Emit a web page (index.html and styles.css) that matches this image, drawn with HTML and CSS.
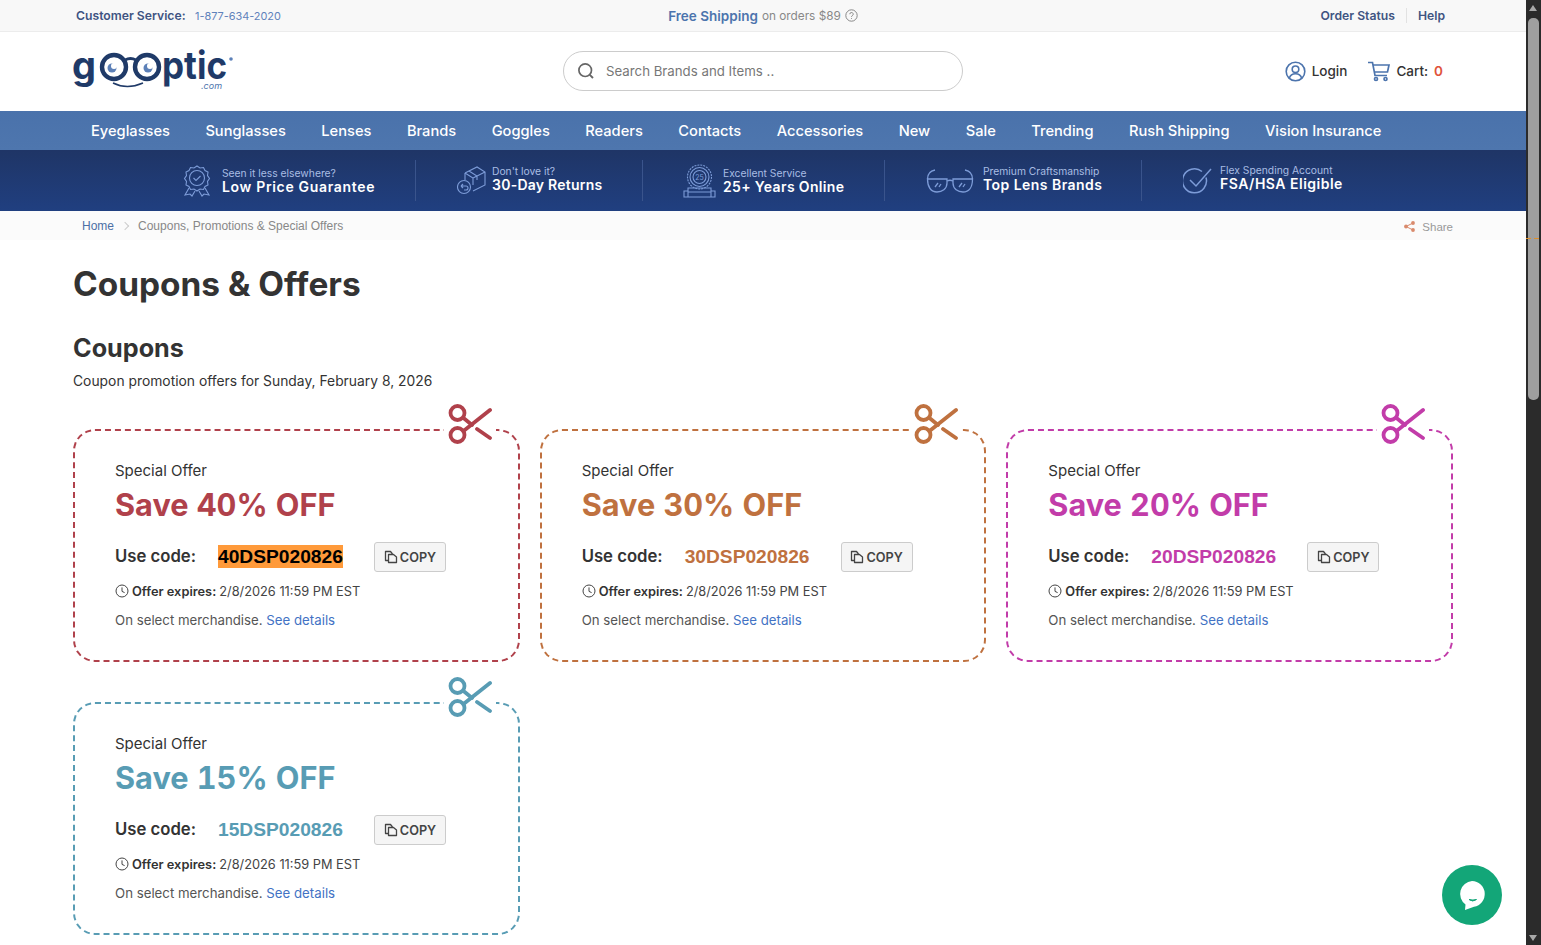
FILE: index.html
```html
<!DOCTYPE html>
<html lang="en">
<head>
    <meta charset="UTF-8">
    <meta name="viewport" content="width=device-width, initial-scale=1.0">
    <title>Coupons &amp; Offers</title>
    <link rel="stylesheet" href="styles.css">
</head>
<body>
    <svg class="defs" width="0" height="0">
        <symbol id="scissors" viewBox="0 0 44 44">
            <g fill="none" stroke="currentColor" stroke-width="3.8" stroke-linecap="round">
                <circle cx="9.500" cy="10" r="7"/>
                <circle cx="9.500" cy="32" r="7"/>
                <path d="M15.500 28 42 7"/>
                <path d="M15.500 15 24 22M29 26 42 35"/>
            </g>
        </symbol>
        <symbol id="clock" viewBox="0 0 14 14">
            <g fill="none" stroke="currentColor" stroke-width="1">
                <circle cx="7" cy="7" r="6"/>
                <path d="M7 3.400V7.400L9.600 8.600"/>
            </g>
        </symbol>
        <symbol id="copy" viewBox="0 0 14 14">
            <g fill="none" stroke="currentColor" stroke-width="1.300" stroke-linejoin="round">
                <path d="M4.500 10.500H1.500V1.500H6.500L8.500 4"/>
                <path d="M4.500 4.500H9.500L12.500 7V12.500H4.500Z"/>
            </g>
        </symbol>
    </svg>

    <div class="window">
        <div class="page">
            <div class="topbar">
                <div class="topbar-left"><b>Customer Service:</b> <a href="#">1-877-634-2020</a></div>
                <div class="topbar-mid">
                    <b>Free Shipping</b> on orders $89
                    <svg width="13" height="13" viewBox="0 0 13 13"><circle cx="6.500" cy="6.500" r="5.700" fill="none" stroke="#888"/><path d="M4.800 5.200a1.700 1.700 0 1 1 2.500 1.500c-.6.3-.8.6-.8 1.200M6.500 9.200v.8" fill="none" stroke="#888"/></svg>
                </div>
                <div class="topbar-right"><a href="#">Order Status</a><a href="#">Help</a></div>
            </div>

            <header class="header">
                <a class="logo" href="#">
                    <svg width="162" height="68" viewBox="0 -12 162 68">
                        <text class="logo-text" x="0" y="30" font-size="38">g</text>
                        <g fill="none" stroke="#1f3a68" stroke-width="4.400">
                            <circle cx="42" cy="18" r="12"/>
                            <circle cx="75" cy="18" r="12"/>
                            <path d="M53 11q5.500-3 11 0" stroke-width="3"/>
                        </g>
                        <circle cx="40" cy="19" r="4.500" fill="#5c80b8"/>
                        <circle cx="42" cy="17" r="3" fill="#fff"/>
                        <circle cx="76" cy="19" r="4.500" fill="#5c80b8"/>
                        <circle cx="78" cy="17" r="3" fill="#fff"/>
                        <path d="M41 34q14 7 30 0" fill="none" stroke="#1f3a68" stroke-width="1.500"/>
                        <text class="logo-text" x="90" y="30" font-size="38" textLength="65" lengthAdjust="spacingAndGlyphs">ptic</text>
                        <circle cx="159" cy="10" r="1.800" fill="#5c80b8"/>
                        <text class="logo-com" x="129" y="40" font-size="9">.com</text>
                    </svg>
                </a>
                <div class="search">
                    <svg width="18" height="18" viewBox="0 0 18 18"><circle cx="8.200" cy="8.200" r="6.300" fill="none" stroke="#666" stroke-width="1.700"/><path d="M12.800 12.800 16 16" stroke="#666" stroke-width="1.900"/></svg>
                    <span>Search Brands and Items ..</span>
                </div>
                <div class="account">
                    <a href="#" class="account-link">
                        <svg width="21" height="21" viewBox="0 0 21 21"><g fill="none" stroke="#4c74ad" stroke-width="1.600"><circle cx="10.500" cy="10.500" r="9.300"/><circle cx="10.500" cy="8.300" r="3.300"/><path d="M4.300 17.300c1-3.400 3.300-4.500 6.200-4.500s5.200 1.100 6.200 4.500"/></g></svg>
                        Login
                    </a>
                    <a href="#" class="account-link">
                        <svg width="22" height="21" viewBox="0 0 22 21"><g fill="none" stroke="#4c74ad" stroke-width="1.700"><path d="M0 1.500H4.500L7 14.500H19"/><path d="M5 4H21L19.500 11H6.300"/><circle cx="8" cy="18" r="1.500"/><circle cx="17.500" cy="18" r="1.500"/></g></svg>
                        Cart: <em>0</em>
                    </a>
                </div>
            </header>

            <nav class="nav">
                <a href="#">Eyeglasses</a>
                <a href="#">Sunglasses</a>
                <a href="#">Lenses</a>
                <a href="#">Brands</a>
                <a href="#">Goggles</a>
                <a href="#">Readers</a>
                <a href="#">Contacts</a>
                <a href="#">Accessories</a>
                <a href="#">New</a>
                <a href="#">Sale</a>
                <a href="#">Trending</a>
                <a href="#">Rush Shipping</a>
                <a href="#">Vision Insurance</a>
            </nav>

            <div class="promo">
                <div class="promo-item promo-price">
                    <svg width="28" height="32" viewBox="0 0 28 32"><g fill="none" stroke="#7d9cd8" stroke-width="1.100"><path d="M14 1l3 2 3.500-.5 1.500 3 3 1.500-.5 3.500 2 3-2 3 .5 3.500-3 1.500-1.500 3-3.500-.5-3 2-3-2-3.500.5-1.500-3-3-1.500.5-3.500-2-3 2-3-.5-3.500 3-1.500 1.500-3L11 3Z"/><circle cx="14" cy="13" r="7.500"/><path d="M10.500 13l2.500 2.500 4.500-4.500"/><path d="M6 23 2 30l5-1 2 2 3-5M22 23l4 7-5-1-2 2-3-5"/></g></svg>
                    <div><small>Seen it less elsewhere?</small><strong>Low Price Guarantee</strong></div>
                </div>
                <div class="promo-item promo-returns">
                    <svg width="29" height="31" viewBox="0 0 29 31"><g fill="none" stroke="#7d9cd8" stroke-width="1.100"><path d="M8 8 20 2l8 5v13l-12 6M8 8l8 5v7M28 7l-12 6M12 6l8 5v4"/><path d="M8 8v7"/><circle cx="7" cy="22" r="6.500"/><path d="M4 21h5a2 2 0 0 1 0 4H7M4 21l2-2M4 21l2 2"/></g></svg>
                    <div><small>Don't love it?</small><strong>30-Day Returns</strong></div>
                </div>
                <div class="promo-item promo-years">
                    <svg width="33" height="34" viewBox="0 0 33 34"><g fill="none" stroke="#7d9cd8" stroke-width="1.100"><circle cx="16.500" cy="13" r="12" stroke-dasharray="2 1"/><circle cx="16.500" cy="13" r="9.500"/><circle cx="16.500" cy="13" r="6.500"/><path d="M5 24H28V28H5ZM1 27H5V33H28V27H32V33H1Z"/></g><text class="badge-num" x="16.500" y="15.500" text-anchor="middle" font-size="7">25</text></svg>
                    <div><small>Excellent Service</small><strong>25+ Years Online</strong></div>
                </div>
                <div class="promo-item promo-lens">
                    <svg width="48" height="24" viewBox="0 0 48 24"><g fill="none" stroke="#7d9cd8" stroke-width="1.300"><path d="M1.500 10C1.500 5 4 2 9 1M46.500 10C46.500 5 44 2 39 1"/><path d="M1.500 10H21V14C21 20 16 23 11 23C5 23 1.500 18 1.500 10Z"/><path d="M46.500 10H27V14C27 20 32 23 37 23C43 23 46.500 18 46.500 10Z"/><path d="M21 12q3-1.500 6 0"/><path d="M9 18l3-4M13 18l2-3M33 18l3-4M37 18l2-3"/></g></svg>
                    <div><small>Premium Craftsmanship</small><strong>Top Lens Brands</strong></div>
                </div>
                <div class="promo-item promo-fsa">
                    <svg width="29" height="26" viewBox="0 0 29 26"><g fill="none" stroke="#7d9cd8" stroke-width="1.500"><path d="M23 9.500A12 12 0 1 1 19 3.500"/><path d="M7 12l6 6L28 1"/></g></svg>
                    <div><small>Flex Spending Account</small><strong>FSA/HSA Eligible</strong></div>
                </div>
            </div>

            <div class="crumbs">
                <div><a href="#">Home</a><i></i><span>Coupons, Promotions &amp; Special Offers</span></div>
                <a href="#" class="share">
                    <svg width="11" height="11" viewBox="0 0 11 11"><g fill="#d98a6c"><circle cx="2" cy="5.500" r="1.900"/><circle cx="9" cy="2" r="1.900"/><circle cx="9" cy="9" r="1.900"/></g><path d="M9 2 2 5.500 9 9" fill="none" stroke="#d98a6c"/></svg>
                    Share
                </a>
            </div>

            <main class="content">
                <h1>Coupons &amp; Offers</h1>
                <h2>Coupons</h2>
                <p class="lead">Coupon promotion offers for Sunday, February 8, 2026</p>

                <div class="coupons">
                    <div class="coupon red">
                        <svg class="cut"><use href="#scissors"/></svg>
                        <div class="label">Special Offer</div>
                        <div class="save">Save 40% OFF</div>
                        <div class="code-row">
                            <b>Use code:</b>
                            <div class="code"><mark>40DSP020826</mark></div>
                            <button class="copy"><svg width="14" height="14"><use href="#copy"/></svg>COPY</button>
                        </div>
                        <div class="expires"><svg width="14" height="14"><use href="#clock"/></svg><b>Offer expires:</b> 2/8/2026 11:59 PM EST</div>
                        <div class="terms">On select merchandise. <a href="#">See details</a></div>
                    </div>
                    <div class="coupon orange">
                        <svg class="cut"><use href="#scissors"/></svg>
                        <div class="label">Special Offer</div>
                        <div class="save">Save 30% OFF</div>
                        <div class="code-row">
                            <b>Use code:</b>
                            <div class="code">30DSP020826</div>
                            <button class="copy"><svg width="14" height="14"><use href="#copy"/></svg>COPY</button>
                        </div>
                        <div class="expires"><svg width="14" height="14"><use href="#clock"/></svg><b>Offer expires:</b> 2/8/2026 11:59 PM EST</div>
                        <div class="terms">On select merchandise. <a href="#">See details</a></div>
                    </div>
                    <div class="coupon pink">
                        <svg class="cut"><use href="#scissors"/></svg>
                        <div class="label">Special Offer</div>
                        <div class="save">Save 20% OFF</div>
                        <div class="code-row">
                            <b>Use code:</b>
                            <div class="code">20DSP020826</div>
                            <button class="copy"><svg width="14" height="14"><use href="#copy"/></svg>COPY</button>
                        </div>
                        <div class="expires"><svg width="14" height="14"><use href="#clock"/></svg><b>Offer expires:</b> 2/8/2026 11:59 PM EST</div>
                        <div class="terms">On select merchandise. <a href="#">See details</a></div>
                    </div>
                    <div class="coupon teal">
                        <svg class="cut"><use href="#scissors"/></svg>
                        <div class="label">Special Offer</div>
                        <div class="save">Save 15% OFF</div>
                        <div class="code-row">
                            <b>Use code:</b>
                            <div class="code">15DSP020826</div>
                            <button class="copy"><svg width="14" height="14"><use href="#copy"/></svg>COPY</button>
                        </div>
                        <div class="expires"><svg width="14" height="14"><use href="#clock"/></svg><b>Offer expires:</b> 2/8/2026 11:59 PM EST</div>
                        <div class="terms">On select merchandise. <a href="#">See details</a></div>
                    </div>
                </div>
            </main>

            <a href="#" class="chat">
                <svg width="32" height="34" viewBox="0 0 32 34"><path d="M16 3a13 13 0 0 1 2 25.800L9 32l.5-5.500A13 13 0 0 1 16 3Z" fill="#fff"/><path d="M13 21.500q3.500 3 7.500 0q-3.500 1-7.500 0Z" fill="#13a678" stroke="#13a678"/></svg>
            </a>
        </div>

        <div class="scrollbar">
            <div class="arrow-up"></div>
            <div class="thumb"></div>
            <div class="tick"></div>
            <div class="arrow-down"></div>
        </div>
    </div>
</body>
</html>
```

FILE: styles.css
```css
*{
    box-sizing: border-box;
}
html, body{
    margin: 0;
    height: 100%;
    overflow: hidden;
}
body{
    font-family: "Inter", "Open Sans", sans-serif;
    color: #333;
    background: #fff;
}
a{
    text-decoration: none;
    color: inherit;
}
.defs{
    display: block;
    height: 0;
}
.window{
    display: flex;
    height: 100vh;
}
.page{
    flex: 1;
    min-width: 0;
    overflow: hidden;
    position: relative;
}

/* top strip */
.topbar{
    display: grid;
    grid-template-columns: 1fr auto 1fr;
    align-items: center;
    height: 32px;
    padding: 0 76px;
    background: #f8f8f8;
    border-bottom: 1px solid #ececec;
    font-size: 12.2px;
}
.topbar b{
    font-weight: 600;
}
.topbar-left{
    color: #3f5482;
}
.topbar-left a{
    margin-left: 6px;
    font-size: 10.9px;
    color: #5f82bb;
}
.topbar-mid{
    display: flex;
    align-items: center;
    gap: 4px;
    font-size: 11.8px;
    color: #888;
}
.topbar-mid b{
    color: #4c74ad;
    font-size: 13.5px;
}
.topbar-right{
    display: flex;
    justify-content: flex-end;
    padding-right: 5px;
    color: #3f5482;
    font-weight: 600;
}
.topbar-right a + a{
    margin-left: 11px;
    padding-left: 11px;
    border-left: 1px solid #e2e2e2;
}

/* logo, search, login */
.header{
    display: grid;
    grid-template-columns: 1fr 400px 1fr;
    align-items: center;
    height: 79px;
    padding: 0 72px 1px;
}
.logo{
    display: block;
    height: 68px;
}
.logo-text{
    font-family: "Inter", sans-serif;
    font-weight: 700;
    fill: #1f3a68;
}
.logo-com{
    font-family: "Inter", sans-serif;
    font-style: italic;
    fill: #4c74ad;
}
.search{
    display: flex;
    align-items: center;
    gap: 11px;
    height: 40px;
    padding-left: 13px;
    border: 1px solid #ccc;
    border-radius: 20px;
    color: #777;
    font-size: 13.25px;
}
.account{
    display: flex;
    justify-content: flex-end;
    gap: 21px;
    padding-right: 11px;
}
.account-link{
    display: flex;
    align-items: center;
    gap: 6px;
    font-size: 13.5px;
    font-weight: 500;
    color: #333;
}
.account-link em{
    font-style: normal;
    font-weight: 600;
    color: #e0533a;
}

/* main menu */
.nav{
    display: flex;
    gap: 35.5px;
    align-items: center;
    height: 39px;
    padding-left: 91px;
    background: linear-gradient(#4a72ab, #4e76ae);
    color: #fff;
    font-size: 14.65px;
    font-weight: 500;
}

.promo{
    display: flex;
    height: 61px;
    padding-left: 183px;
    background: linear-gradient(#1f3566, #203f80);
    color: #fff;
}
.promo-item{
    display: flex;
    align-items: center;
    gap: 8px;
    margin: 10px 0;
    border-right: 1px solid #3a548c;
}
.promo-item:last-child{
    border-right: 0;
}
.promo-item small{
    display: block;
    font-size: 10.3px;
    line-height: 12px;
    color: #a9bde3;
}
.promo-item strong{
    display: block;
    font-size: 14px;
    line-height: 16px;
    font-weight: 600;
}
.promo-price{ width: 233px; gap: 11px; }
.promo-price strong{ letter-spacing: .67px; }
.promo-returns{ width: 227px; padding-left: 41px; gap: 6px; }
.promo-returns strong{ letter-spacing: .25px; }
.promo-returns div, .promo-lens div{ padding-bottom: 3px; }
.promo-years{ width: 242px; padding-left: 40px; gap: 7px; }
.promo-years strong{ letter-spacing: .35px; }
.promo-lens{ width: 257px; padding-left: 41px; gap: 9px; }
.promo-lens strong{ letter-spacing: .45px; }
.promo-fsa{ padding-left: 41px; }
.promo-fsa strong{ letter-spacing: .5px; }
.promo-fsa div{ padding-bottom: 5px; }
.badge-num{
    font-family: "Inter", sans-serif;
    fill: #7d9cd8;
}

/* breadcrumb */
.crumbs{
    display: flex;
    justify-content: space-between;
    align-items: center;
    height: 29px;
    padding: 0 73px 0 82px;
    background: #fbfbfb;
    font-family: "Liberation Sans", Arial, sans-serif;
    font-size: 12px;
    color: #888;
}
.crumbs a:first-child{
    color: #4c6fa5;
}
.crumbs i{
    display: inline-block;
    width: 6px;
    height: 6px;
    margin: 0 10px 1px 8px;
    border-top: 1px solid #ccc;
    border-right: 1px solid #ccc;
    transform: rotate(45deg);
}
.share{
    display: flex;
    align-items: center;
    gap: 7px;
    margin-top: 2px;
    color: #999;
    font-size: 11.5px;
}

.content{
    padding: 0 73px;
}
h1{
    margin: 24px 0 0;
    font-size: 33.4px;
    line-height: 40px;
    font-weight: 700;
    color: #333;
}
h2{
    margin: 29px 0 0;
    font-size: 25.2px;
    line-height: 30px;
    font-weight: 700;
    color: #333;
}
.lead{
    margin: 8px 0 0;
    font-size: 13.85px;
    line-height: 20px;
}

/* coupon cards */
.coupons{
    display: grid;
    grid-template-columns: repeat(3, 1fr);
    gap: 40px 20px;
    margin-top: 38px;
}
.coupon{
    position: relative;
    height: 233px;
    padding: 31px 0 0 40px;
    border: 2px dashed currentColor;
    border-radius: 22px;
}
.red{ color: #b0414b; }
.orange{ color: #bf713f; }
.pink{ color: #c23ca9; }
.teal{ color: #589cb4; }
.cut{
    position: absolute;
    top: -28px;
    right: 22px;
    width: 52px;
    height: 44px;
    padding: 0 4px;
    background: linear-gradient(#fff 0 0) no-repeat center 24px / 100% 6px;
}
.label{
    font-size: 15px;
    line-height: 18px;
    color: #333;
}
.save{
    margin-top: 6px;
    font-size: 30.7px;
    line-height: 38px;
    font-weight: 700;
    font-variant-numeric: tabular-nums;
}
.code-row{
    display: flex;
    align-items: center;
    margin-top: 18px;
    height: 30px;
}
.code-row b{
    width: 103px;
    padding-bottom: 2px;
    font-size: 16.7px;
    font-weight: 600;
    color: #333;
}
.code{
    width: 156px;
    font-family: "Liberation Sans", Arial, sans-serif;
    font-size: 19.2px;
    font-weight: 700;
}
mark{
    padding: 1px 0;
    background: #ff9a3a;
    color: #000;
}
.copy{
    display: flex;
    align-items: center;
    justify-content: center;
    gap: 2px;
    width: 72px;
    height: 30px;
    padding: 0;
    background: #f5f5f5;
    border: 1px solid #ccc;
    border-radius: 3px;
    color: #444;
    font-family: inherit;
    font-size: 12.7px;
    font-weight: 600;
}
.expires{
    display: flex;
    align-items: center;
    gap: 3px;
    margin-top: 10px;
    height: 18px;
    font-size: 12.8px;
    color: #444;
}
.expires b{
    font-weight: 600;
    color: #333;
}
.terms{
    margin-top: 11px;
    font-size: 13.25px;
    line-height: 18px;
    color: #555;
}
.terms a{
    color: #4272c4;
}

.chat{
    position: absolute;
    left: 1442px;
    top: 865px;
    display: flex;
    align-items: center;
    justify-content: center;
    width: 60px;
    height: 60px;
    border-radius: 50%;
    background: #13a678;
}

/* window scrollbar */
.scrollbar{
    position: relative;
    width: 15px;
    background: #2b2b2b;
}
.thumb{
    position: absolute;
    left: 2px;
    top: 18px;
    width: 11px;
    height: 382px;
    border-radius: 5px;
    background: #9f9f9f;
}
.arrow-up, .arrow-down{
    position: absolute;
    left: 3px;
    width: 0;
    height: 0;
    border-left: 4.5px solid transparent;
    border-right: 4.5px solid transparent;
}
.arrow-up{
    top: 5px;
    border-bottom: 6px solid #a8a8a8;
}
.arrow-down{
    bottom: 4px;
    border-top: 6px solid #a8a8a8;
}
.tick{
    position: absolute;
    left: 0;
    top: 238px;
    width: 15px;
    height: 1px;
    background: repeating-linear-gradient(90deg, #e0902a 0 5px, transparent 5px 8px);
}
```
